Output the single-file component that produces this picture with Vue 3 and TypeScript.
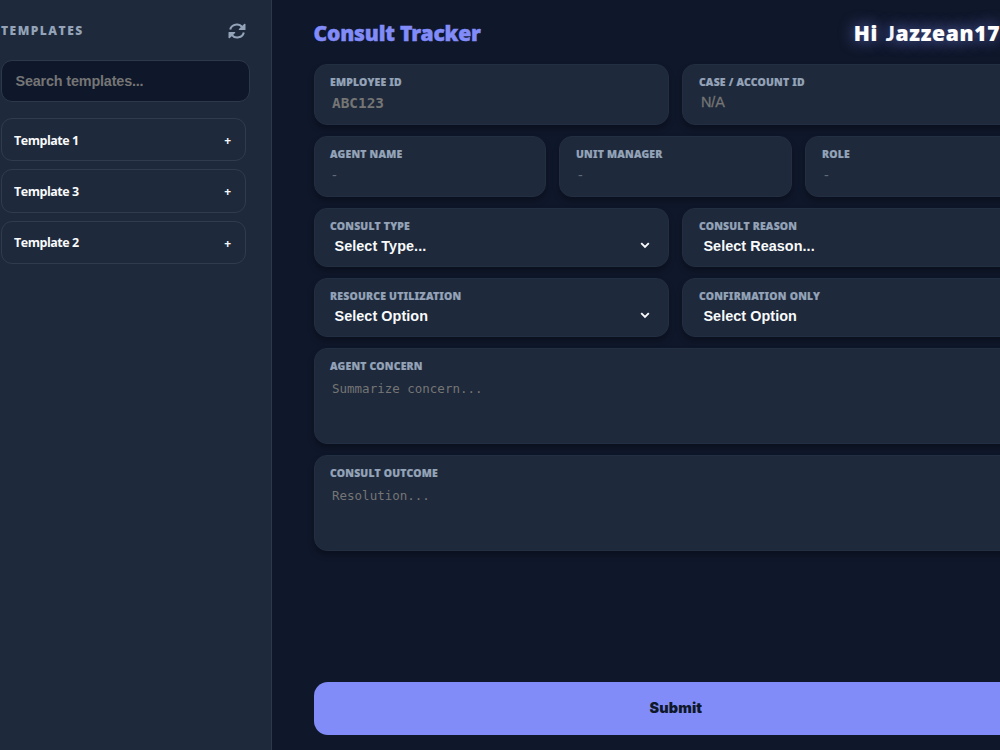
<script setup lang="ts">
interface Field {
  label: string
  value: string
  kind: 'mono' | 'hint' | 'dash' | 'select' | 'area'
  arrow?: boolean
}

const templates: string[] = ['Template 1', 'Template 3', 'Template 2']

const rows: Field[][] = [
  [
    { label: 'EMPLOYEE ID', value: 'ABC123', kind: 'mono' },
    { label: 'CASE / ACCOUNT ID', value: 'N/A', kind: 'hint' },
  ],
  [
    { label: 'AGENT NAME', value: '-', kind: 'dash' },
    { label: 'UNIT MANAGER', value: '-', kind: 'dash' },
    { label: 'ROLE', value: '-', kind: 'dash' },
  ],
  [
    { label: 'CONSULT TYPE', value: 'Select Type...', kind: 'select', arrow: true },
    { label: 'CONSULT REASON', value: 'Select Reason...', kind: 'select' },
  ],
  [
    { label: 'RESOURCE UTILIZATION', value: 'Select Option', kind: 'select', arrow: true },
    { label: 'CONFIRMATION ONLY', value: 'Select Option', kind: 'select' },
  ],
  [{ label: 'AGENT CONCERN', value: 'Summarize concern...', kind: 'area' }],
  [{ label: 'CONSULT OUTCOME', value: 'Resolution...', kind: 'area' }],
]
</script>

<template>
  <div class="app">
    <aside class="sidebar">
      <div class="side-head">
        <span class="side-title">TEMPLATES</span>
        <svg class="refresh" viewBox="0 0 18 16" aria-hidden="true">
          <path class="arc" d="M2.200 6.500A6.700 6.300 0 0 1 14.200 4.200M15.800 9.500A6.700 6.300 0 0 1 3.800 11.800" />
          <path class="head" d="M16.300.7 17.500.9V6.600a.5.5 0 0 1-.5.5H11l-.3-.9 5.400-5.300zM1.700 15.300.5 15.100V9.400a.5.5 0 0 1 .5-.5H7l.3.9-5.400 5.300z" />
        </svg>
      </div>
      <div class="search">Search templates...</div>
      <div class="templates">
        <div v-for="name in templates" :key="name" class="template">
          <span class="template-name">{{ name }}</span>
          <span class="plus">+</span>
        </div>
      </div>
    </aside>

    <main class="main">
      <header class="header">
        <h1 class="title">Consult Tracker</h1>
        <div class="greeting">Hi <span class="cap">J</span>azzean17</div>
      </header>
      <section class="form">
        <div v-for="(row, i) in rows" :key="i" class="row">
          <div v-for="field in row" :key="field.label" class="card" :class="field.kind">
            <div class="label">{{ field.label }}</div>
            <div class="control">
              <span class="value">{{ field.value }}</span>
              <svg v-if="field.arrow" class="arrow" viewBox="0 0 10 7" aria-hidden="true">
                <path d="M1.200 1.200 5 5l3.800-3.800" />
              </svg>
            </div>
          </div>
        </div>
      </section>
      <button class="submit" type="button"><span>Submit</span></button>
    </main>
  </div>
</template>

<style>
body {
  overflow: hidden;
  background: #0f172a;
}
</style>

<style scoped>
* {
  box-sizing: border-box;
}
.app {
  display: flex;
  width: 1000px;
  height: 750px;
  overflow: hidden;
  background: #0f172a;
  font-family: "Noto Sans", "Open Sans", sans-serif;
  white-space: nowrap;
}
.sidebar {
  flex: none;
  width: 272px;
  padding: 22px 21px 0 1px;
  background: #1e293b;
  border-right: 1px solid #2d394b;
}
.side-head {
  display: flex;
  align-items: center;
  justify-content: space-between;
  height: 18px;
  padding-right: 4.500px;
}
.side-title {
  position: relative;
  top: -0.5px;
  color: #94a3b8;
  font-family: "Open Sans", sans-serif;
  font-size: 12px;
  font-weight: 800;
  letter-spacing: 1.500px;
}
.refresh {
  width: 18px;
  height: 16px;
}
.arc {
  fill: none;
  stroke: #94a3b8;
  stroke-width: 2.100;
}
.head {
  fill: #94a3b8;
}
.search {
  width: 249px;
  height: 42.500px;
  margin-top: 19.500px;
  padding-left: 13.500px;
  border: 1px solid #2d394b;
  border-radius: 11px;
  background: #0f172a;
  color: #757575;
  font: 700 14.400px/41px "Liberation Sans", sans-serif;
  letter-spacing: -0.170px;
}
.templates {
  display: flex;
  flex-direction: column;
  gap: 8px;
  width: 245px;
  margin-top: 15.900px;
}
.template {
  display: flex;
  align-items: center;
  justify-content: space-between;
  height: 43.400px;
  padding: 0 14px 0 12px;
  border: 1px solid #303c4e;
  border-radius: 11px;
  color: #f8fafc;
  font-family: "Open Sans", sans-serif;
  font-weight: 700;
}
.template-name {
  padding-top: 1px;
  font-size: 12.500px;
  letter-spacing: -0.480px;
}
.plus {
  padding-top: 2px;
  font-size: 12px;
}
.main {
  flex: none;
  display: flex;
  flex-direction: column;
  width: 766.300px;
  height: 750px;
  padding: 13px 0 15px 41.500px;
}
.header {
  display: flex;
  justify-content: space-between;
  height: 40px;
  margin-bottom: 10.500px;
  line-height: 40px;
  font-size: 21px;
  font-weight: 900;
}
.title {
  margin: 0;
  color: #818cf8;
  font: inherit;
  letter-spacing: -0.170px;
  -webkit-text-stroke: 0.500px #818cf8;
}
.greeting {
  width: 184.500px;
  color: #fff;
  letter-spacing: 0.700px;
  word-spacing: 1.500px;
  text-shadow: 0 0 15px rgba(129, 140, 248, 0.8);
  -webkit-text-stroke: 0.150px #fff;
}
.cap {
  font-family: Lato, sans-serif;
  line-height: 1;
}
.form {
  display: flex;
  flex-direction: column;
  gap: 11px;
}
.row {
  display: flex;
  gap: 13px;
}
.card {
  flex: 1 1 0;
  height: 61px;
  padding: 9.500px 15.500px 0;
  border: 1px solid #222e41;
  border-radius: 13px;
  background: #1e293b;
  box-shadow: 0 4px 6px rgba(0, 0, 0, 0.3);
}
.card.select {
  height: 59px;
}
.card.area {
  height: 96px;
}
.label {
  height: 16px;
  color: #94a3b8;
  font-size: 10.400px;
  font-weight: 900;
  letter-spacing: 0.220px;
  line-height: 16px;
  -webkit-text-stroke: 0.200px #94a3b8;
}
.control {
  display: flex;
  align-items: center;
  justify-content: space-between;
  height: 26px;
  padding: 0 2px;
  color: #757575;
}
.mono .control {
  font: 700 14.400px/26px "DejaVu Sans Mono", monospace;
}
.hint .control {
  height: 24px;
  font: 400 14.400px/24px "Liberation Sans", sans-serif;
  -webkit-text-stroke: 0.300px #757575;
}
.dash .control {
  height: 26.500px;
  font: 400 14.400px/26px "Liberation Sans", sans-serif;
  color: #5f6978;
}
.select .control {
  height: 24px;
  padding: 0 3px 0 4.500px;
  color: #f8fafc;
  font: 700 14.400px/24px "Liberation Sans", sans-serif;
  letter-spacing: 0.060px;
}
.area .control {
  height: 30px;
  font: 400 12.500px/30px "DejaVu Sans Mono", monospace;
}
.arrow {
  width: 10px;
  height: 7px;
  margin-top: -1px;
  fill: none;
  stroke: #f8fafc;
  stroke-width: 1.900;
}
.submit {
  flex: none;
  height: 53px;
  margin-top: auto;
  padding: 0;
  border: 0;
  border-radius: 14px;
  background: #818cf8;
  color: #0f172a;
  font: 900 14.400px/52px Inter, sans-serif;
}
.submit span {
  position: relative;
  top: -1px;
  letter-spacing: 0.130px;
}
</style>
